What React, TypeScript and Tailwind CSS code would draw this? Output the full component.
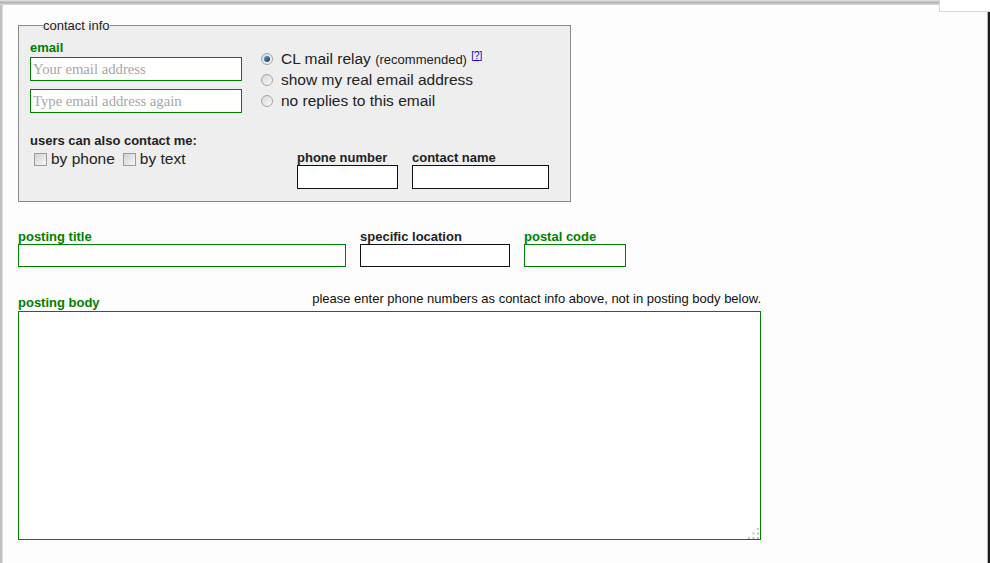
import React from "react";

function Radio({ checked }: { checked?: boolean }) {
  return (
    <span className="inline-flex items-center justify-center w-[12px] h-[12px] rounded-full border border-[#a4a4a4] bg-gradient-to-br from-[#d6d6d6] to-[#fbfbfb] shrink-0">
      {checked && <span className="w-[6px] h-[6px] rounded-full bg-gradient-to-br from-[#5fa4d6] to-[#123a6a]" />}
    </span>
  );
}

function Check() {
  return (
    <span className="inline-block w-[13px] h-[13px] border border-[#9c9c9c] bg-gradient-to-br from-[#d2d2d2] to-[#f7f7f7] shrink-0" />
  );
}

function Field({ label, green, w, h = "h-[23px]" }: { label: string; green?: boolean; w: string; h?: string }) {
  return (
    <label className={`flex flex-col ${w}`}>
      <span className={`text-[13px] leading-[15px] font-bold ${green ? "text-[#008000]" : "text-[#222]"}`}>{label}</span>
      <input
        type="text"
        className={`${h} w-full bg-white border outline-none px-[2px] ${green ? "border-[#008000]" : "border-[#111]"}`}
      />
    </label>
  );
}

export default function App() {
  return (
    <div className="w-[990px] h-[563px] bg-[#fdfdfd] flex flex-col overflow-hidden font-['Liberation_Sans',Arial,sans-serif] text-[#222]">
      {/* window frame top */}
      <div className="flex h-[5px] shrink-0">
        <div className="w-[939px] bg-gradient-to-b from-[#e4e4e4] via-[#b4b4b4] to-[#d9d9d9]" />
        <div className="flex-1 border-l border-[#d6d6d6] bg-white" />
      </div>

      <div className="flex flex-1 min-h-0">
        <div className="w-[3px] bg-[#c1c1c1] border-r border-[#dcdcdc]" />

        <div className="flex-1 flex flex-col pl-[15px]">
          <div className="flex justify-end h-[7px] shrink-0">
            <div className="w-[48px] border-l border-b border-[#d6d6d6] bg-white" />
          </div>

          {/* contact info */}
          <fieldset className="mt-[6px] w-[552px] border border-[#8a8a8a] bg-[#eeeeee] pl-[11px] pr-[21px] pb-[12px]">
            <legend className="ml-[13px] px-0 text-[13px] leading-[15px] text-[#222]">contact info</legend>

            <div className="flex pt-[7px]">
              <div className="flex flex-col w-[212px]">
                <span className="text-[13px] leading-[15px] font-bold text-[#008000]">email</span>
                <input
                  type="text"
                  placeholder="Your email address"
                  className="mt-[2px] h-[24px] w-full bg-white border border-[#008000] outline-none px-[2px] font-['Liberation_Serif','Times_New_Roman',serif] text-[14.7px] placeholder:text-[#a6a6a6]"
                />
                <input
                  type="text"
                  placeholder="Type email address again"
                  className="mt-[8px] h-[24px] w-full bg-white border border-[#008000] outline-none px-[2px] font-['Liberation_Serif','Times_New_Roman',serif] text-[14.7px] placeholder:text-[#a6a6a6]"
                />
              </div>

              <div className="ml-[19px] pt-[8px] flex flex-col text-[15.5px] leading-[21px]">
                <div className="flex items-center h-[21px]">
                  <Radio checked />
                  <span className="ml-[8px]">
                    CL mail relay <span className="text-[13px]">(recommended)</span>{" "}
                    <span className="text-[10px] leading-[0px] text-[#0000cc] align-[5px]">
                      [<a className="underline">?</a>]
                    </span>
                  </span>
                </div>
                <div className="flex items-center h-[21px]">
                  <Radio />
                  <span className="ml-[8px]">show my real email address</span>
                </div>
                <div className="flex items-center h-[21px]">
                  <Radio />
                  <span className="ml-[8px]">no replies to this email</span>
                </div>
              </div>
            </div>

            <div className="flex mt-[19px] h-[57px]">
              <div className="w-[267px] pt-[1px] flex flex-col">
                <span className="text-[13px] leading-[15px] font-bold">users can also contact me:</span>
                <div className="flex items-center mt-[2px] pl-[4px] text-[15.5px] leading-[18px]">
                  <Check />
                  <span className="ml-[4px]">by phone</span>
                  <span className="ml-[8px] flex"><Check /></span>
                  <span className="ml-[4px]">by text</span>
                </div>
              </div>
              <div className="flex items-end gap-[14px]">
                <Field label="phone number" w="w-[101px]" h="h-[24px]" />
                <Field label="contact name" w="w-[137px]" h="h-[24px]" />
              </div>
            </div>
          </fieldset>

          {/* title row */}
          <div className="flex gap-[14px] mt-[27px]">
            <Field label="posting title" green w="w-[328px]" />
            <Field label="specific location" w="w-[150px]" />
            <Field label="postal code" green w="w-[102px]" />
          </div>

          {/* posting body */}
          <div className="w-[743px] mt-[28px] flex flex-col">
            <div className="flex justify-between h-[15px]">
              <span className="text-[13px] leading-[15px] font-bold text-[#008000]">posting body</span>
              <span className="text-[13px] leading-[7px] text-[#111]">
                please enter phone numbers as contact info above, not in posting body below.
              </span>
            </div>
            <div className="relative mt-[1px]">
              <textarea className="block w-full h-[229px] bg-white border border-[#008000] outline-none resize-none" />
              <svg className="absolute right-[1px] bottom-[1px]" width="12" height="12" viewBox="0 0 12 12">
                <rect x="9" y="1" width="2" height="2" fill="#c4c4c4" />
                <rect x="4.5" y="5.5" width="2" height="2" fill="#c4c4c4" />
                <rect x="9" y="5.5" width="2" height="2" fill="#c4c4c4" />
                <rect x="0" y="10" width="2" height="2" fill="#c4c4c4" />
                <rect x="4.5" y="10" width="2" height="2" fill="#c4c4c4" />
                <rect x="9" y="10" width="2" height="2" fill="#c4c4c4" />
              </svg>
            </div>
          </div>
        </div>

        <div className="w-[3px] flex flex-col">
          <div className="h-[7px] border-b border-[#d6d6d6] bg-white" />
          <div className="flex-1 bg-[#1e1e1e] border-l border-[#b4b4b4]" />
        </div>
      </div>
    </div>
  );
}
